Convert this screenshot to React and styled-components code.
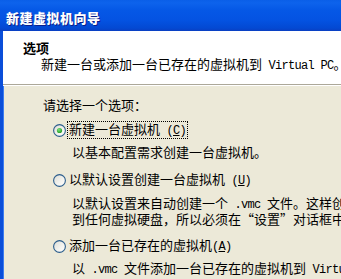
import React from "react";
import styled, { createGlobalStyle } from "styled-components";

const Global = createGlobalStyle`
  html, body { margin: 0; padding: 0; background: #ECE9D8; }
  body { width: 341px; height: 279px; overflow: hidden; }
`;

const Window = styled.div`
  width: 341px;
  height: 279px;
  display: flex;
  flex-direction: column;
  overflow: hidden;
  font-family: "Noto Sans CJK SC", sans-serif;
  font-size: 13px;
  color: #000;
`;

const TitleBar = styled.div`
  height: 31px;
  flex: none;
  box-sizing: border-box;
  padding: 5px 0 0 6px;
  display: flex;
  align-items: center;
  background: linear-gradient(
    to bottom,
    #0A5FE8 0px,
    #0D63EC 3px,
    #0558E6 10px,
    #0453E2 20px,
    #0349D3 28px,
    #0A3FC2 31px
  );
`;

const Title = styled.span`
  color: #fff;
  font-weight: 900;
  font-size: 13px;
  line-height: 14px;
  letter-spacing: 0.5px;
  text-shadow: 1px 1px 0 #0A1E8C;
  white-space: nowrap;
`;

const Frame = styled.div`
  flex: 1;
  display: flex;
  flex-direction: column;
  border-left: 3px solid #0A4ED9;
  box-shadow: inset 1px 0 0 #3C7CF0;
`;

const Header = styled.div`
  height: 54px;
  flex: none;
  background: #fff;
  box-sizing: border-box;
  padding: 10px 0 0 20px;
  border-bottom: 1px solid #ACA899;
  box-shadow: 0 1px 0 #fff;
  display: flex;
  flex-direction: column;
  gap: 2px;
`;

const HeaderTitle = styled.div`
  font-weight: 700;
  line-height: 14px;
`;

const HeaderDesc = styled.div`
  padding-left: 18px;
  line-height: 14px;
  white-space: nowrap;
`;

const Body = styled.div`
  padding: 13px 0 0 40px;
  display: flex;
  flex-direction: column;
  white-space: nowrap;
`;

const Prompt = styled.div`
  line-height: 14px;
`;

const Option = styled.div`
  display: flex;
  flex-direction: column;
  margin-top: ${(p) => p.$gap}px;
`;

const RadioRow = styled.div`
  display: flex;
  align-items: center;
  height: 14px;
  padding-left: 10px;
`;

const Label = styled.span`
  margin-left: 2px;
  line-height: 14px;
  padding: 0 1px;
  outline: ${(p) => (p.$focus ? "1px dotted #000" : "none")};
`;

const Sub = styled.div`
  padding-left: 29px;
  margin-top: ${(p) => p.$gap}px;
  line-height: 13px;
`;

const Latin = styled.span`
  font-family: "Liberation Mono", monospace;
  font-size: 12px;
  letter-spacing: -0.7px;
`;

const Key = styled.span`
  text-decoration: underline;
`;

function Radio({ checked }) {
  const id = checked ? "rf1" : "rf0";
  return (
    <svg width="13" height="13" viewBox="0 0 13 13">
      <defs>
        <linearGradient id={id} x1="0" y1="0" x2="1" y2="1">
          <stop offset="0" stopColor="#DCDCD4" />
          <stop offset="0.6" stopColor="#F4F4F0" />
          <stop offset="1" stopColor="#FFFFFF" />
        </linearGradient>
        <radialGradient id="dot" cx="0.4" cy="0.35" r="0.7">
          <stop offset="0" stopColor="#7BE27B" />
          <stop offset="1" stopColor="#1E9A1E" />
        </radialGradient>
      </defs>
      <circle cx="6.5" cy="6.5" r="5.9" fill={`url(#${id})`} stroke="#2B5D8C" strokeWidth="1.1" />
      {checked && <circle cx="6.5" cy="6.5" r="2.6" fill="url(#dot)" />}
    </svg>
  );
}

export default function App() {
  return (
    <>
      <Global />
      <Window>
        <TitleBar>
          <Title>新建虚拟机向导</Title>
        </TitleBar>
        <Frame>
          <Header>
            <HeaderTitle>选项</HeaderTitle>
            <HeaderDesc>
              新建一台或添加一台已存在的虚拟机到<Latin> Virtual PC</Latin>。
            </HeaderDesc>
          </Header>
          <Body>
            <Prompt>请选择一个选项：</Prompt>
            <Option $gap={11}>
              <RadioRow>
                <Radio checked />
                <Label $focus>
                  新建一台虚拟机<Latin> (<Key>C</Key>)</Latin>
                </Label>
              </RadioRow>
              <Sub $gap={8}>以基本配置需求创建一台虚拟机。</Sub>
            </Option>
            <Option $gap={15}>
              <RadioRow>
                <Radio />
                <Label>
                  以默认设置创建一台虚拟机<Latin> (<Key>U</Key>)</Latin>
                </Label>
              </RadioRow>
              <Sub $gap={9}>
                以默认设置来自动创建一个<Latin> .vmc </Latin>文件。这样创建的虚拟机未连接
                <br />
                到任何虚拟硬盘，所以必须在“设置”对话框中指定虚拟硬盘。
              </Sub>
            </Option>
            <Option $gap={14}>
              <RadioRow>
                <Radio />
                <Label>
                  添加一台已存在的虚拟机<Latin>(<Key>A</Key>)</Latin>
                </Label>
              </RadioRow>
              <Sub $gap={8}>
                以<Latin> .vmc </Latin>文件添加一台已存在的虚拟机到<Latin> Virtual PC</Latin>。
              </Sub>
            </Option>
          </Body>
        </Frame>
      </Window>
    </>
  );
}
